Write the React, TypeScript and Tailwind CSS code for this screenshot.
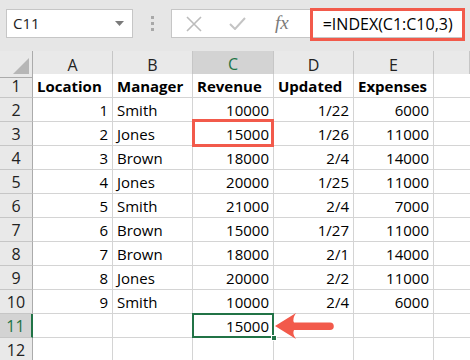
import React from "react";

const FONT = { fontFamily: '"Open Sans", "Liberation Sans", sans-serif' };

type Val = string | number;

const data: Val[][] = [
  ["Location", "Manager", "Revenue", "Updated", "Expenses"],
  [1, "Smith", 10000, "1/22", 6000],
  [2, "Jones", 15000, "1/26", 11000],
  [3, "Brown", 18000, "2/4", 14000],
  [4, "Jones", 20000, "1/25", 11000],
  [5, "Smith", 21000, "2/4", 7000],
  [6, "Brown", 15000, "1/27", 11000],
  [7, "Brown", 18000, "2/1", 14000],
  [8, "Jones", 20000, "2/2", 11000],
  [9, "Smith", 10000, "2/4", 6000],
  ["", "", 15000, "", ""],
  ["", "", "", "", ""],
];

const cols = ["A", "B", "C", "D", "E", ""];
const gridCols = "grid grid-cols-[33px_80px_80px_81px_80px_80px_1fr]";

function isRight(v: Val, r: number) {
  if (r === 0) return false;
  return typeof v === "number" || /\d+\/\d+/.test(String(v));
}

function TopBar() {
  return (
    <div className="flex h-[51px] items-start bg-[#e6e6e6] pl-[6px] pr-[7px] pt-[9px]">
      <div className="flex h-[29px] w-[127px] items-center justify-between border border-[#c6c6c6] bg-white pl-[6px] pr-[8px]">
        <span className="text-[15px] text-[#222]">C11</span>
        <svg width="9" height="5" viewBox="0 0 9 5">
          <path d="M0 0 L9 0 L4.5 5 Z" fill="#7a7a7a" />
        </svg>
      </div>
      <div className="flex w-[38px] flex-col items-center gap-[3px] pt-[7px]">
        <span className="h-[3px] w-[3px] bg-[#a8a8a8]" />
        <span className="h-[3px] w-[3px] bg-[#a8a8a8]" />
        <span className="h-[3px] w-[3px] bg-[#a8a8a8]" />
      </div>
      <div className="relative flex h-[29px] flex-1 items-center border border-[#c6c6c6] bg-white">
        <svg className="ml-[14px]" width="16" height="16" viewBox="0 0 16 16">
          <path d="M1 1 L15 15 M15 1 L1 15" stroke="#bcbcbc" strokeWidth="1.6" />
        </svg>
        <svg className="ml-[27px]" width="17" height="13" viewBox="0 0 17 13">
          <path d="M1 7 L6 12 L16 1" stroke="#c4c4c4" strokeWidth="2" fill="none" />
        </svg>
        <span
          className="ml-[29px] text-[19px] italic text-[#7a7a7a]"
          style={{ fontFamily: '"Liberation Serif", serif' }}
        >
          fx
        </span>
        <span className="ml-[34px] text-[16px] text-black">=INDEX(C1:C10,3)</span>
        <div className="absolute -top-[2px] -bottom-[4px] left-[138px] -right-[3px] border-[3px] border-[#f25a4b]" />
      </div>
    </div>
  );
}

function Header() {
  return (
    <div className={`${gridCols} h-[23px] bg-[#e9e9e9]`}>
      <div className="relative border-r border-b border-[#ababab]">
        <svg className="absolute right-[3px] bottom-[3px]" width="16" height="16" viewBox="0 0 16 16">
          <path d="M16 0 L16 16 L0 16 Z" fill="#b6b6b6" />
        </svg>
      </div>
      {cols.map((c, i) =>
        c === "C" ? (
          <div
            key={i}
            className="flex items-center justify-center border-r border-b-2 border-r-[#c6c6c6] border-b-[#217346] bg-[#d3d3d3] pt-[1px] text-[16px] text-[#217346]"
          >
            {c}
          </div>
        ) : (
          <div
            key={i}
            className="flex items-center justify-center border-r border-b border-r-[#c6c6c6] border-b-[#ababab] pt-[1px] text-[16px] text-[#222]"
          >
            {c}
          </div>
        )
      )}
    </div>
  );
}

function Cell({ v, r, c }: { v: Val; r: number; c: number }) {
  const right = isRight(v, r);
  const marked = (r === 2 || r === 10) && c === 2;
  return (
    <div
      className={`${marked ? "relative z-10" : ""} h-[24px] border-r border-b border-[#d4d4d4] bg-white px-[4px] pt-[1px] text-[15px] leading-[23px] text-black ${
        right ? "text-right" : "text-left"
      } ${r === 0 ? "font-bold" : ""}`}
    >
      {v}
      {r === 2 && c === 2 && (
        <div className="absolute -top-[3px] -left-[1px] -right-[1px] -bottom-[2px] border-[3px] border-[#f25a4b]" />
      )}
      {r === 10 && c === 2 && (
        <>
          <div className="absolute -top-[1px] -left-[1px] -right-[1px] -bottom-[1px] border-2 border-[#217346]" />
          <div className="absolute -right-[4px] -bottom-[4px] h-[6px] w-[6px] border border-white bg-[#217346]" />
          <svg
            className="absolute top-[-2px] left-[calc(100%+2px)]"
            width="62"
            height="28"
            viewBox="0 0 62 28"
          >
            <path
              d="M0 14 L21 1 Q17 7 19 10.5 L55 10.5 A3.8 3.8 0 0 1 55 18.1 L19 18.1 Q17 22 21 27 Z"
              fill="#f25a4b"
            />
          </svg>
        </>
      )}
    </div>
  );
}

export default function App() {
  return (
    <div className="h-[360px] w-[470px] overflow-hidden bg-white" style={FONT}>
      <TopBar />
      <Header />
      {data.map((row, r) => (
        <div key={r} className={gridCols}>
          {r === 10 ? (
            <div className="flex h-[24px] items-center justify-center border-r-2 border-b border-r-[#217346] border-b-[#c6c6c6] bg-[#d3d3d3] pt-[1px] text-[16px] text-[#217346]">
              {r + 1}
            </div>
          ) : (
            <div className="flex h-[24px] items-center justify-center border-r border-b border-r-[#ababab] border-b-[#c6c6c6] bg-[#e9e9e9] pt-[1px] text-[16px] text-[#222]">
              {r + 1}
            </div>
          )}
          {row.map((v, c) => (
            <Cell key={c} v={v} r={r} c={c} />
          ))}
          <div className="h-[24px] border-b border-[#d4d4d4] bg-white" />
        </div>
      ))}
    </div>
  );
}
